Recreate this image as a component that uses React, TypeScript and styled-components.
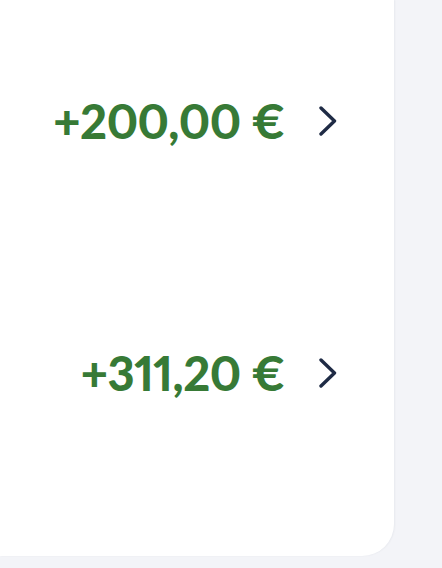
import React from "react";
import styled, { createGlobalStyle } from "styled-components";

const Global = createGlobalStyle`
  html, body { margin: 0; padding: 0; background: #f3f4f8; }
  body { width: 442px; height: 568px; overflow: hidden; font-family: Lato, "Open Sans", sans-serif; }
`;

const Page = styled.div`
  width: 442px;
  height: 568px;
  background: #f3f4f8;
`;

const Card = styled.div`
  width: 394px;
  height: 556px;
  box-sizing: border-box;
  background: #ffffff;
  border-bottom-right-radius: 32px;
  box-shadow: 1px 0 2px rgba(20, 30, 60, 0.05);
  padding-top: 78px;
  display: flex;
  flex-direction: column;
  gap: 166px;
`;

const Row = styled.div`
  height: 86px;
  display: flex;
  align-items: center;
  justify-content: flex-end;
  padding-right: 56px;
  gap: 33px;
`;

const Amount = styled.span`
  color: #377a36;
  font-family: Lato, sans-serif;
  font-weight: 900;
  font-size: 47px;
  font-variant-numeric: proportional-nums;
  letter-spacing: -0.5px;
  line-height: 1;
`;

const Chevron = () => (
  <svg width="20" height="30" viewBox="0 0 20 30" fill="none">
    <path d="M3 2 L16.5 15 L3 28" stroke="#1f2b45" strokeWidth="3.4" strokeLinecap="round" strokeLinejoin="round" />
  </svg>
);

const amounts = ["+200,00 €", "+311,20 €"];

export default function App() {
  return (
    <Page>
      <Global />
      <Card>
        {amounts.map((a) => (
          <Row key={a}>
            <Amount>{a}</Amount>
            <Chevron />
          </Row>
        ))}
      </Card>
    </Page>
  );
}
